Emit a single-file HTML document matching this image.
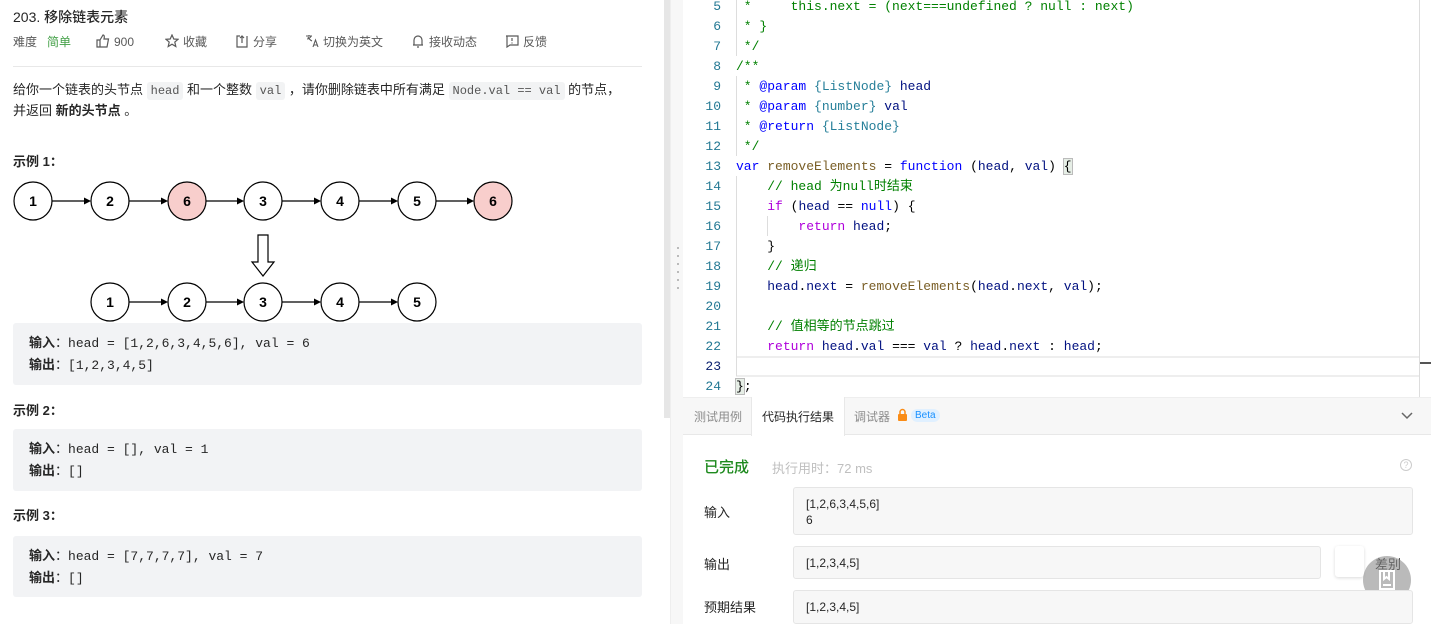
<!DOCTYPE html>
<html><head><meta charset="utf-8"><style>
*{margin:0;padding:0;box-sizing:border-box}
body{width:1431px;height:624px;overflow:hidden;background:#fff;font-family:"Liberation Sans","Noto Sans CJK SC",sans-serif;color:#262626;position:relative}
.a{position:absolute;white-space:nowrap}
code,.m{font-family:"Liberation Mono","Noto Sans CJK SC",monospace}
.ic{background:#f2f3f4;color:#555;border-radius:3px;padding:2px 4px;font-size:12px}
.pre{position:absolute;left:13px;width:629px;background:#f2f3f5;border-radius:3px;font-size:13px;line-height:21px;padding:9px 16px}
.pre b{font-family:"Liberation Sans","Noto Sans CJK SC",sans-serif}
.meta{font-size:12px;color:#595959;top:34px;line-height:16px}
.meta svg{vertical-align:-2px;margin-right:4px}
.ln{position:absolute;left:683px;width:38px;text-align:right;color:#237893;font-family:"Liberation Mono",monospace;font-size:13px;height:20px;line-height:20px}
.cl{position:absolute;left:736px;font-family:"Liberation Mono","Noto Sans CJK SC",monospace;font-size:13px;white-space:pre;color:#000;height:20px;line-height:20px}
.c{color:#008000}.k{color:#0000ff}.p{color:#af00db}.f{color:#795e26}.v{color:#001080}.t{color:#267f99}
.box{position:absolute;background:#f7f7f7;border:1px solid #e5e5e5;border-radius:3px;font-size:12px;color:#262626;padding:8px 12px;line-height:16px}
.lbl{position:absolute;left:704px;font-size:13px;color:#262626}
</style></head><body>
<div class="a" style="left:13px;top:7px;font-size:14px;font-weight:500">203. 移除链表元素</div>
<div class="a meta" style="left:13px">难度</div>
<div class="a meta" style="left:47px;color:#43a047">简单</div>
<div class="a meta" style="left:96px"><svg width="14" height="14" viewBox="0 0 14 14" fill="none" stroke="#595959" stroke-width="1.2"><path d="M1 6H4V13H1ZM4 6L7 1C8.5 1 8.5 3 8 5H12.5L11 13H4"/></svg>900</div>
<div class="a meta" style="left:165px"><svg width="14" height="14" viewBox="0 0 14 14" fill="none" stroke="#595959" stroke-width="1.2"><path d="M7 1L8.8 5L13 5.3L9.8 8.1L10.8 12.5L7 10.2L3.2 12.5L4.2 8.1L1 5.3L5.2 5Z"/></svg>收藏</div>
<div class="a meta" style="left:235px"><svg width="14" height="14" viewBox="0 0 14 14" fill="none" stroke="#595959" stroke-width="1.2"><path d="M5 2H2V13H12V2M7 2V9M5 4L7 2L9 4"/></svg>分享</div>
<div class="a meta" style="left:305px"><svg width="14" height="14" viewBox="0 0 14 14" fill="none" stroke="#595959" stroke-width="1.1"><path d="M1 2H7M4 1V2M2 5C4 5 6 3 6 2M3 3C4 5 5 6 7 7M8 13L10.5 6L13 13M9 11H12"/></svg>切换为英文</div>
<div class="a meta" style="left:411px"><svg width="14" height="14" viewBox="0 0 14 14" fill="none" stroke="#595959" stroke-width="1.2"><path d="M3 11V6A4 4 0 0 1 11 6V11ZM2 11H12M6 13H8"/></svg>接收动态</div>
<div class="a meta" style="left:505px"><svg width="14" height="14" viewBox="0 0 14 14" fill="none" stroke="#595959" stroke-width="1.2"><path d="M1 2H13V11H5L2 13V2ZM7 4V7M7 8.5V9.5"/></svg>反馈</div>
<div class="a" style="left:13px;top:66px;width:629px;height:1px;background:#e8e8e8"></div>
<div class="a" style="left:13px;top:80px;font-size:13px;line-height:20px">给你一个链表的头节点 <code class="ic">head</code> 和一个整数 <code class="ic">val</code> ，请你删除链表中所有满足 <code class="ic">Node.val == val</code> 的节点，<br>并返回 <b>新的头节点</b> 。</div>
<div class="a" style="left:13px;top:151px;font-size:13px;font-weight:bold">示例 1：</div>
<svg class="a" style="left:0;top:170px" width="530" height="155" viewBox="0 170 530 155">
<g stroke="#000" stroke-width="1.2" font-family="Liberation Sans" font-weight="bold" font-size="14" text-anchor="middle">
<g fill="#fff">
<circle cx="33" cy="201" r="19"/><circle cx="110" cy="201" r="19"/><circle cx="187" cy="201" r="19" fill="#f8cecc"/><circle cx="263" cy="201" r="19"/><circle cx="340" cy="201" r="19"/><circle cx="417" cy="201" r="19"/><circle cx="493" cy="201" r="19" fill="#f8cecc"/>
<circle cx="110" cy="302" r="19"/><circle cx="187" cy="302" r="19"/><circle cx="263" cy="302" r="19"/><circle cx="340" cy="302" r="19"/><circle cx="417" cy="302" r="19"/>
</g>
<path d="M52 201H85M129 201H162M206 201H238M282 201H315M359 201H392M436 201H468M129 302H162M206 302H238M282 302H315M359 302H392" fill="none"/>
<g stroke="none" fill="#000"><path d="M91 201L84 197.5V204.5ZM168 201L161 197.5V204.5ZM244 201L237 197.5V204.5ZM321 201L314 197.5V204.5ZM398 201L391 197.5V204.5ZM474 201L467 197.5V204.5ZM168 302L161 298.5V305.5ZM244 302L237 298.5V305.5ZM321 302L314 298.5V305.5ZM398 302L391 298.5V305.5Z"/></g>
<path d="M258 235H268V262H274L263 276L252 262H258Z" fill="#fff"/>
<g stroke="none" fill="#000">
<text x="33" y="206">1</text><text x="110" y="206">2</text><text x="187" y="206">6</text><text x="263" y="206">3</text><text x="340" y="206">4</text><text x="417" y="206">5</text><text x="493" y="206">6</text>
<text x="110" y="307">1</text><text x="187" y="307">2</text><text x="263" y="307">3</text><text x="340" y="307">4</text><text x="417" y="307">5</text></g></g></svg>
<div class="pre m" style="top:323px;height:62px"><b>输入</b>：head = [1,2,6,3,4,5,6], val = 6<br><b>输出</b>：[1,2,3,4,5]</div>
<div class="a" style="left:13px;top:400px;font-size:13px;font-weight:bold">示例 2：</div>
<div class="pre m" style="top:429px;height:62px"><b>输入</b>：head = [], val = 1<br><b>输出</b>：[]</div>
<div class="a" style="left:13px;top:505px;font-size:13px;font-weight:bold">示例 3：</div>
<div class="pre m" style="top:536px;height:61px"><b>输入</b>：head = [7,7,7,7], val = 7<br><b>输出</b>：[]</div>
<div class="a" style="left:664px;top:0;width:6px;height:418px;background:#e6e6e6"></div>
<div class="a" style="left:670px;top:0;width:13px;height:624px;background:#f7f7f7;border-left:1px solid #eee"></div>
<div class="a" style="left:677px;top:247px;width:2px;height:44px;background:repeating-linear-gradient(#bbb 0 2px,transparent 2px 8px)"></div>
<div class="a" style="left:736px;top:356px;width:683px;height:21px;border-top:2px solid #eee;border-bottom:2px solid #eee"></div>
<div class="a" style="left:1419px;top:0;width:1px;height:397px;background:#ddd"></div>
<div class="a" style="left:1420px;top:362px;width:11px;height:2px;background:#555"></div>
<div class="a" style="left:736px;top:-4px;width:1px;height:60px;background:#ddd"></div>
<div class="a" style="left:736px;top:76px;width:1px;height:80px;background:#ddd"></div>
<div class="a" style="left:736px;top:176px;width:1px;height:200px;background:#ddd"></div>
<div class="a" style="left:767px;top:216px;width:1px;height:20px;background:#ddd"></div>
<div class="ln" style="top:-3px">5</div><div class="cl c" style="top:-3px"> *     this.next = (next===undefined ? null : next)</div>
<div class="ln" style="top:17px">6</div><div class="cl c" style="top:17px"> * }</div>
<div class="ln" style="top:37px">7</div><div class="cl c" style="top:37px"> */</div>
<div class="ln" style="top:57px">8</div><div class="cl c" style="top:57px">/**</div>
<div class="ln" style="top:77px">9</div><div class="cl c" style="top:77px"> * <span class="k">@param</span> <span class="t">{ListNode}</span> <span class="v">head</span></div>
<div class="ln" style="top:97px">10</div><div class="cl c" style="top:97px"> * <span class="k">@param</span> <span class="t">{number}</span> <span class="v">val</span></div>
<div class="ln" style="top:117px">11</div><div class="cl c" style="top:117px"> * <span class="k">@return</span> <span class="t">{ListNode}</span></div>
<div class="ln" style="top:137px">12</div><div class="cl c" style="top:137px"> */</div>
<div class="ln" style="top:157px">13</div><div class="cl" style="top:157px"><span class="k">var</span> <span class="f">removeElements</span> = <span class="k">function</span> (<span class="v">head</span>, <span class="v">val</span>) <span style="background:#e6eee6;outline:1px solid #bbb">{</span></div>
<div class="ln" style="top:177px">14</div><div class="cl c" style="top:177px">    // head 为null时结束</div>
<div class="ln" style="top:197px">15</div><div class="cl" style="top:197px">    <span class="p">if</span> (<span class="v">head</span> == <span class="k">null</span>) {</div>
<div class="ln" style="top:217px">16</div><div class="cl" style="top:217px">        <span class="p">return</span> <span class="v">head</span>;</div>
<div class="ln" style="top:237px">17</div><div class="cl" style="top:237px">    }</div>
<div class="ln" style="top:257px">18</div><div class="cl c" style="top:257px">    // 递归</div>
<div class="ln" style="top:277px">19</div><div class="cl" style="top:277px">    <span class="v">head</span>.<span class="v">next</span> = <span class="f">removeElements</span>(<span class="v">head</span>.<span class="v">next</span>, <span class="v">val</span>);</div>
<div class="ln" style="top:297px">20</div>
<div class="ln" style="top:317px">21</div><div class="cl c" style="top:317px">    // 值相等的节点跳过</div>
<div class="ln" style="top:337px">22</div><div class="cl" style="top:337px">    <span class="p">return</span> <span class="v">head</span>.<span class="v">val</span> === <span class="v">val</span> ? <span class="v">head</span>.<span class="v">next</span> : <span class="v">head</span>;</div>
<div class="ln" style="top:357px;color:#0b216f">23</div>
<div class="ln" style="top:377px">24</div><div class="cl" style="top:377px"><span style="background:#e6eee6;outline:1px solid #bbb">}</span>;</div>
<div class="a" style="left:683px;top:397px;width:748px;height:38px;background:#f7f7f7;border-bottom:1px solid #e8e8e8;border-top:1px solid #eee"></div>
<div class="a" style="left:694px;top:408px;font-size:12px;color:#8c8c8c">测试用例</div>
<div class="a" style="left:751px;top:397px;width:94px;height:39px;background:#fff;border-left:1px solid #e8e8e8;border-right:1px solid #e8e8e8"></div>
<div class="a" style="left:762px;top:408px;font-size:12px;color:#262626">代码执行结果</div>
<div class="a" style="left:854px;top:408px;font-size:12px;color:#8c8c8c">调试器</div>
<svg class="a" style="left:897px;top:408px" width="11" height="13"><path d="M3 6V4A2.5 2.5 0 0 1 8 4V6" stroke="#fa8c16" stroke-width="1.5" fill="none"/><rect x="1" y="6" width="9" height="7" rx="1" fill="#fa8c16"/></svg>
<div class="a" style="left:911px;top:409px;font-size:10px;color:#1890ff;background:#e0f0ff;border-radius:7px;padding:0 4px;line-height:13px">Beta</div>
<svg class="a" style="left:1400px;top:411px" width="14" height="10"><path d="M2 2L7 7L12 2" stroke="#666" stroke-width="1.5" fill="none"/></svg>
<div class="a" style="left:704px;top:456px;font-size:15px;color:#1e8a1e;font-weight:500">已完成</div>
<div class="a" style="left:772px;top:458px;font-size:13px;color:#bfbfbf">执行用时：72 ms</div>
<div class="a" style="left:1400px;top:459px;width:12px;height:12px;border:1px solid #ccc;border-radius:50%;font-size:9px;color:#ccc;text-align:center;line-height:10px">?</div>
<div class="lbl" style="top:502px">输入</div>
<div class="box" style="left:793px;top:487px;width:620px;height:48px">[1,2,6,3,4,5,6]<br>6</div>
<div class="lbl" style="top:554px">输出</div>
<div class="box" style="left:793px;top:546px;width:528px;height:33px">[1,2,3,4,5]</div>
<div class="a" style="left:1335px;top:546px;width:29px;height:31px;background:#fff;border-radius:3px;box-shadow:0 1px 3px rgba(0,0,0,.15)"></div>
<div class="a" style="left:1375px;top:554px;font-size:13px">差别</div>
<div class="a" style="left:1363px;top:556px;width:48px;height:48px;border-radius:50%;background:rgba(140,140,140,.6)"></div>
<svg class="a" style="left:1378px;top:570px" width="18" height="20"><path d="M2 1H16V19H2ZM6 1V9L8.5 7L11 9V1M5 15H13" stroke="#fff" stroke-width="2" fill="none"/></svg>
<div class="lbl" style="top:597px">预期结果</div>
<div class="box" style="left:793px;top:590px;width:620px;height:34px">[1,2,3,4,5]</div>
</body></html>
